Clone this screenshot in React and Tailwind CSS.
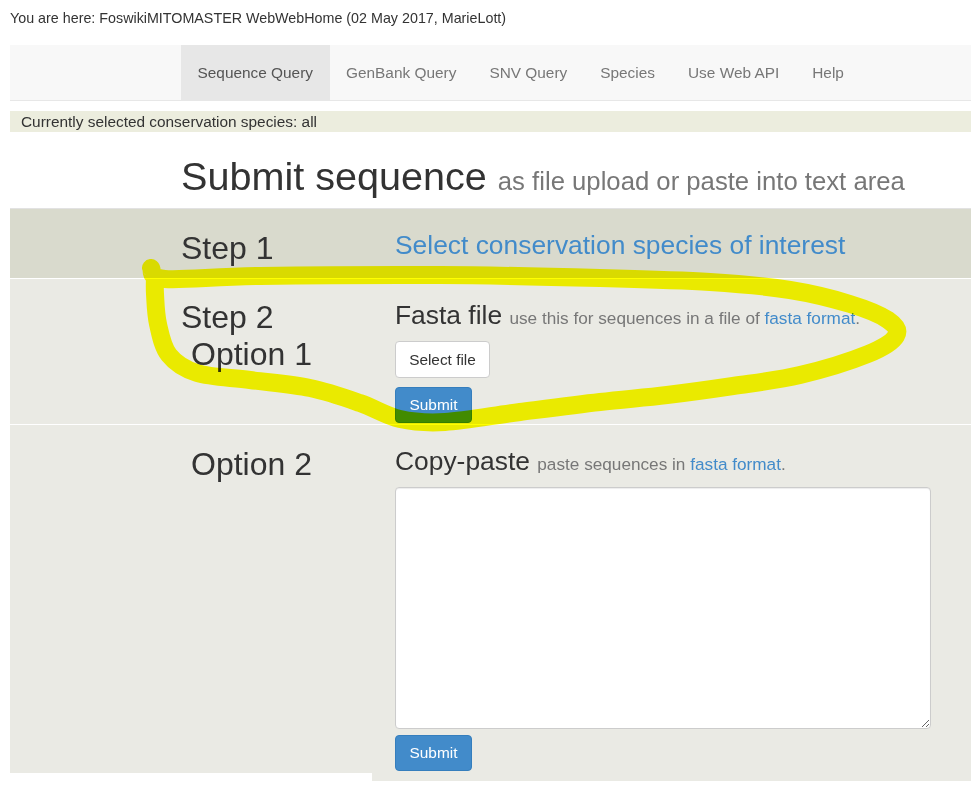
import React from "react";

const font = "font-['Liberation_Sans','Arial',sans-serif]";

function NavItem({ label, active }) {
  return (
    <div
      className={
        "h-full flex items-center px-[16.5px] text-[15.4px] " +
        (active ? "bg-[#e7e7e7] text-[#555]" : "text-[#777]")
      }
    >
      {label}
    </div>
  );
}

function Btn({ children, primary, className = "" }) {
  return (
    <button
      className={
        "flex items-center justify-center rounded-[4px] border text-[15.4px] px-[13px] " +
        (primary
          ? "bg-[#428bca] border-[#357ebd] text-white"
          : "bg-white border-[#ccc] text-[#333]") +
        " " +
        className
      }
    >
      {children}
    </button>
  );
}

// Catmull-Rom spline through points -> cubic bezier path
function smoothPath(pts) {
  let d = `M ${pts[0][0]} ${pts[0][1]}`;
  for (let i = 0; i < pts.length - 1; i++) {
    const p0 = pts[i - 1] || pts[i];
    const p1 = pts[i];
    const p2 = pts[i + 1];
    const p3 = pts[i + 2] || p2;
    const c1x = p1[0] + (p2[0] - p0[0]) / 6;
    const c1y = p1[1] + (p2[1] - p0[1]) / 6;
    const c2x = p2[0] - (p3[0] - p1[0]) / 6;
    const c2y = p2[1] - (p3[1] - p1[1]) / 6;
    d += ` C ${c1x.toFixed(1)} ${c1y.toFixed(1)}, ${c2x.toFixed(1)} ${c2y.toFixed(1)}, ${p2[0]} ${p2[1]}`;
  }
  return d;
}

const markerPts = [
  [151, 268],
  [165, 279],
  [260, 276],
  [440, 275],
  [600, 278],
  [710, 282],
  [790, 290],
  [850, 304],
  [888, 320],
  [896, 336],
  [868, 354],
  [800, 375],
  [733, 386],
  [667, 395],
  [600, 402],
  [520, 412],
  [445, 422],
  [400, 419],
  [360, 403],
  [310, 388],
  [250, 380],
  [197, 373],
  [169, 355],
  [158, 324],
  [155, 294],
  [155, 277],
];

export default function App() {
  return (
    <div className={"relative isolate min-h-[790px] w-[971px] overflow-hidden bg-white text-[#333] " + font}>
      <div className="h-[45px] pl-[10px] pt-[8px] text-[14.3px] leading-[20px]">
        You are here: FoswikiMITOMASTER WebWebHome (02 May 2017, MarieLott)
      </div>

      <nav className="ml-[10px] h-[56px] bg-[#f8f8f8] border-b border-[#e7e7e7] flex pl-[171px]">
        <NavItem label="Sequence Query" active />
        <NavItem label="GenBank Query" />
        <NavItem label="SNV Query" />
        <NavItem label="Species" />
        <NavItem label="Use Web API" />
        <NavItem label="Help" />
      </nav>

      <div className="ml-[10px] mt-[10px] h-[21px] bg-[#ecedde] pl-[11px] text-[15.4px] leading-[21px]">
        Currently selected conservation species: all
      </div>

      <div className="h-[76px] pl-[181px] pt-[24px]">
        <h1 className="h-[40px] text-[39.6px] leading-[40px] whitespace-nowrap">
          Submit sequence{" "}
          <span className="text-[25.7px] leading-none text-[#777]">as file upload or paste into text area</span>
        </h1>
      </div>

      {/* Step 1 */}
      <div className="ml-[10px] h-[70px] border-t border-[#e2e2e2] bg-[#d9dacd] flex">
        <div className="w-[362px] shrink-0 pl-[171px] pt-[21px] text-[32px] leading-[37px]">Step 1</div>
        <div className="pl-[23px] pt-[21px] text-[26.4px] leading-[30px] text-[#428bca] whitespace-nowrap">
          Select conservation species of interest
        </div>
      </div>

      {/* Step 2 */}
      <div className="ml-[10px] mt-px h-[145px] bg-[#eaeae4] flex">
        <div className="w-[362px] shrink-0 pl-[171px] pt-[20px] text-[32px] leading-[37px]">
          <div>Step 2</div>
          <div className="pl-[10px]">Option 1</div>
        </div>
        <div className="pl-[23px] pt-[21px]">
          <div className="h-[30px] text-[26.4px] leading-[30px] whitespace-nowrap">
            Fasta file{" "}
            <span className="text-[17.2px] leading-none text-[#777]">
              use this for sequences in a file of <span className="text-[#428bca]">fasta format</span>.
            </span>
          </div>
          <Btn className="mt-[11px] h-[37px] w-[95px]">Select file</Btn>
          <Btn primary className="mt-[9px] h-[36px] w-[77px]">Submit</Btn>
        </div>
      </div>

      {/* Option 2 */}
      <div className="ml-[10px] mt-px flex items-start">
        <div className="w-[362px] shrink-0 h-[348px] bg-[#eaeae4] pl-[181px] pt-[21px] text-[32px] leading-[37px]">
          Option 2
        </div>
        <div className="flex-1 h-[356px] bg-[#eaeae4] pl-[23px] pt-[21px]">
          <div className="h-[30px] text-[26.4px] leading-[30px] whitespace-nowrap">
            Copy-paste{" "}
            <span className="text-[17.2px] leading-none text-[#777]">
              paste sequences in <span className="text-[#428bca]">fasta format</span>.
            </span>
          </div>
          <textarea className="block mt-[11px] w-[536px] h-[242px] bg-white border border-[#ccc] rounded-[4px] shadow-[inset_0_1px_1px_rgba(0,0,0,0.075)] outline-none" />
          <Btn primary className="mt-[6px] h-[36px] w-[77px]">Submit</Btn>
        </div>
      </div>

      {/* Yellow marker annotation */}
      <svg
        className="pointer-events-none absolute left-0 top-0 mix-blend-multiply"
        width="971"
        height="790"
        viewBox="0 0 971 790"
      >
        <path
          d={smoothPath(markerPts)}
          fill="none"
          stroke="#ffff00"
          strokeWidth="18"
          strokeLinecap="round"
          strokeLinejoin="round"
        />
      </svg>
    </div>
  );
}
